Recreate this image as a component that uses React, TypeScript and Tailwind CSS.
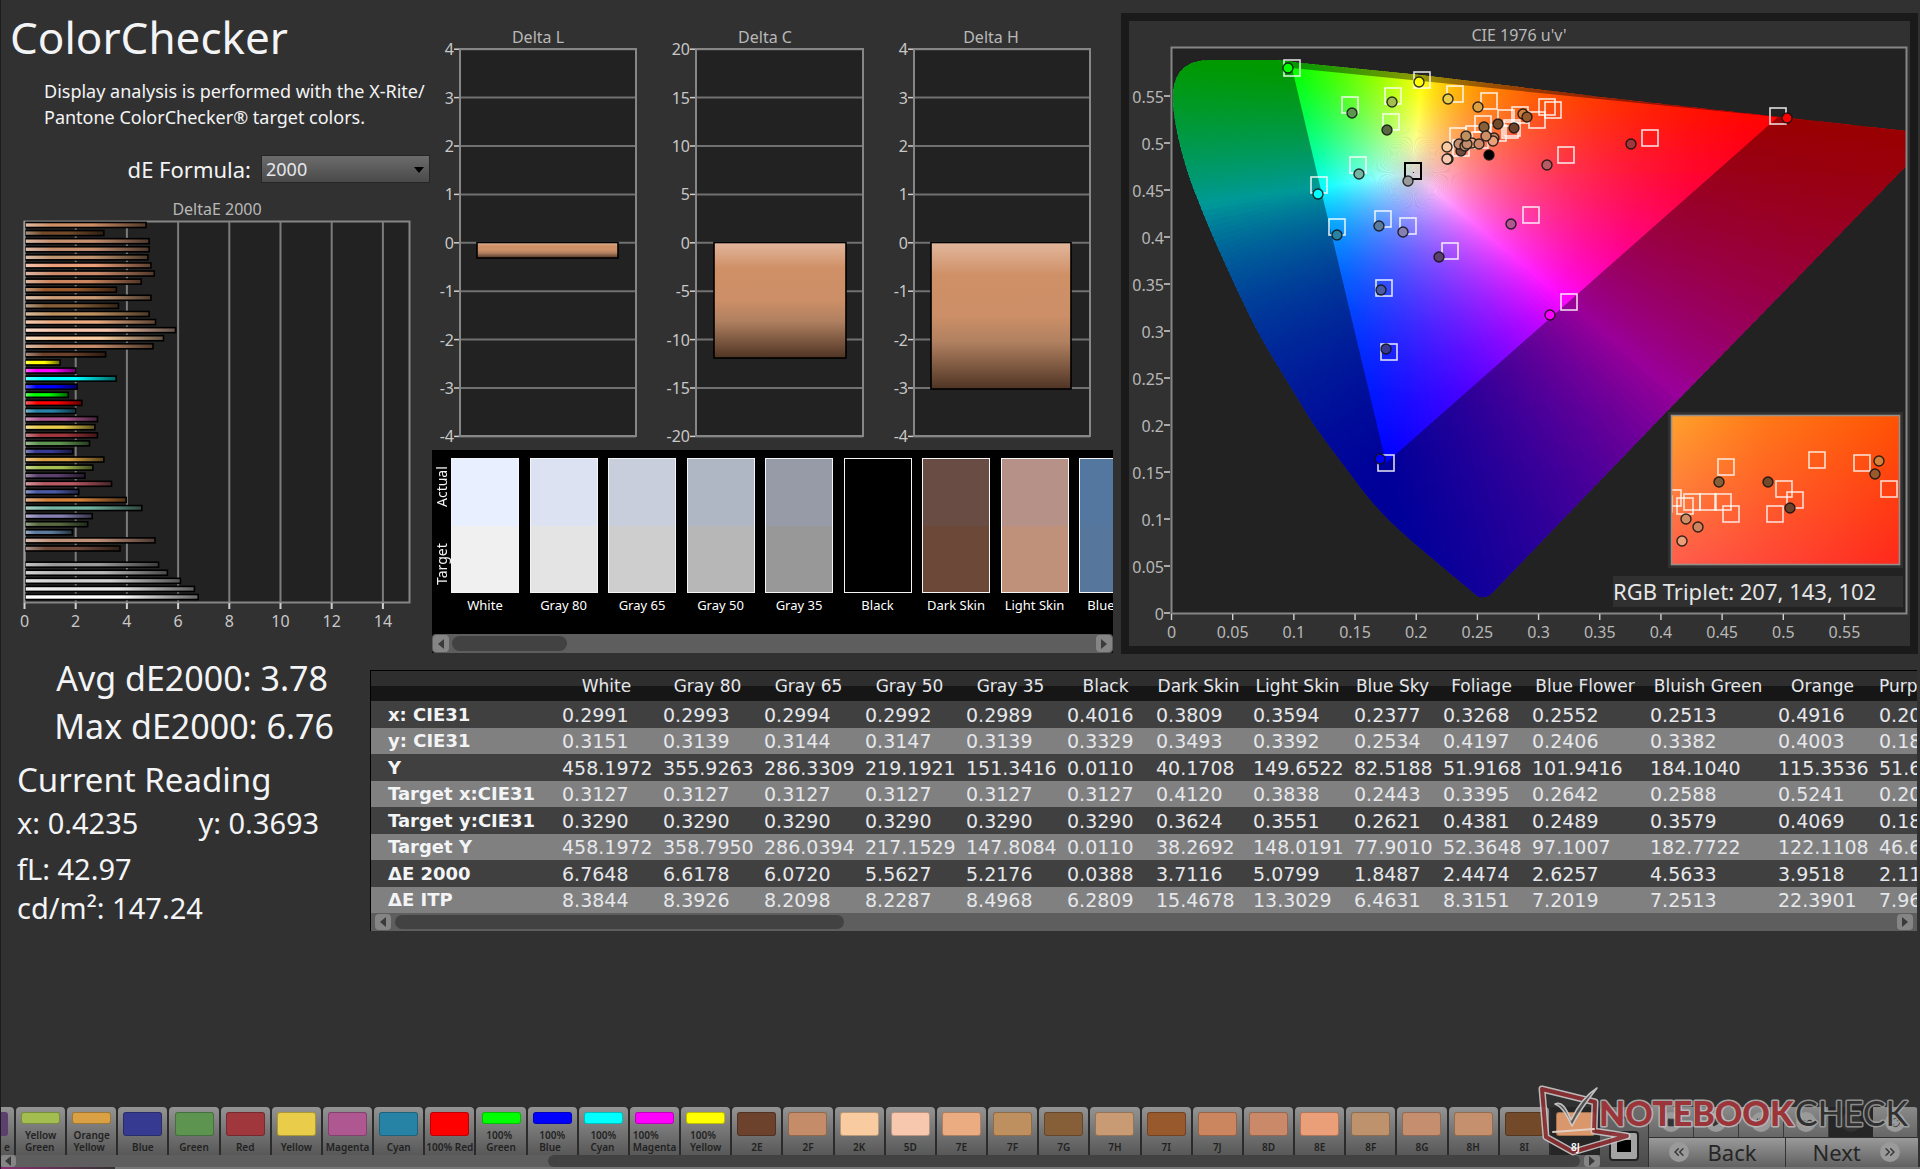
import React from 'react';
import {
  ChevronsLeft,
  ChevronsRight,
  ChevronUp,
  Infinity as InfinityIcon,
  Play,
  RefreshCw,
  Square,
  StepForward,
} from 'lucide-react';

// [delta E, bar colour], top row first
const DELTA_E: [number, string][] = [
  [4.73, '#cf8f66'], [3.08, '#724a2a'], [4.85, '#c48e6f'], [4.85, '#c48e6f'], [4.8, '#be926c'],
  [4.92, '#eb9f79'], [5.05, '#ca8a6a'], [4.54, '#cb8660'], [3.57, '#98592c'], [4.92, '#c99b75'],
  [3.65, '#865f38'], [4.85, '#be9060'], [5.1, '#ebac82'], [5.88, '#f7c7ae'], [5.41, '#f8cca0'],
  [5.0, '#c48c69'], [3.15, '#6c422c'], [1.37, '#ffff00'], [1.99, '#ff00ff'], [3.56, '#00ffff'],
  [2.04, '#0000ff'], [1.69, '#00ff00'], [2.22, '#ff0000'], [1.99, '#2783a5'], [2.83, '#ae5791'],
  [2.73, '#e9cc4a'], [2.83, '#a0373c'], [2.52, '#5d9450'], [1.87, '#363b91'], [3.08, '#d9a143'],
  [2.65, '#a3bd50'], [2.34, '#5b3f6d'], [3.38, '#b65a63'], [2.1, '#4a5ba5'], [3.9518, '#d3803a'],
  [4.5633, '#73b5a2'], [2.6257, '#8580b1'], [2.4474, '#56693f'], [1.8487, '#5b7a9e'], [5.0799, '#bf907a'],
  [3.7116, '#6e4a3c'], [0, '#000000'], [5.2176, '#9a9a9a'], [5.5627, '#b8b8b8'], [6.072, '#d0d0d0'],
  [6.6178, '#e8e8e8'], [6.7648, '#ffffff'],
];

const DELTA_CHARTS = [
  { title: 'Delta L', titleX: 538, left: 460, right: 636, step: 1, barLeft: 477, barRight: 618, bottom: 258 },
  { title: 'Delta C', titleX: 765, left: 696, right: 863, step: 5, barLeft: 714, barRight: 846, bottom: 358 },
  { title: 'Delta H', titleX: 991, left: 914, right: 1090, step: 1, barLeft: 931, barRight: 1071, bottom: 389 },
];

const PATCHES = [
  { name: 'White', actual: '#e8efff', target: '#f0f0f0' },
  { name: 'Gray 80', actual: '#dde2f3', target: '#e4e4e4' },
  { name: 'Gray 65', actual: '#c8cedb', target: '#cecece' },
  { name: 'Gray 50', actual: '#b0b7c4', target: '#b7b7b7' },
  { name: 'Gray 35', actual: '#979ba7', target: '#989898' },
  { name: 'Black', actual: '#000000', target: '#000000' },
  { name: 'Dark Skin', actual: '#694c43', target: '#6c4838' },
  { name: 'Light Skin', actual: '#b69188', target: '#bf907a' },
  { name: 'Blue Sky', actual: '#5477a0', target: '#57769b' },
];

const COLUMNS = ['White', 'Gray 80', 'Gray 65', 'Gray 50', 'Gray 35', 'Black', 'Dark Skin', 'Light Skin', 'Blue Sky', 'Foliage', 'Blue Flower', 'Bluish Green', 'Orange', 'Purplish Blue'];

const ROWS = [
  { label: 'x: CIE31', values: ['0.2991', '0.2993', '0.2994', '0.2992', '0.2989', '0.4016', '0.3809', '0.3594', '0.2377', '0.3268', '0.2552', '0.2513', '0.4916', '0.2048'] },
  { label: 'y: CIE31', values: ['0.3151', '0.3139', '0.3144', '0.3147', '0.3139', '0.3329', '0.3493', '0.3392', '0.2534', '0.4197', '0.2406', '0.3382', '0.4003', '0.1821'] },
  { label: 'Y', values: ['458.1972', '355.9263', '286.3309', '219.1921', '151.3416', '0.0110', '40.1708', '149.6522', '82.5188', '51.9168', '101.9416', '184.1040', '115.3536', '51.6210'] },
  { label: 'Target x:CIE31', values: ['0.3127', '0.3127', '0.3127', '0.3127', '0.3127', '0.3127', '0.4120', '0.3838', '0.2443', '0.3395', '0.2642', '0.2588', '0.5241', '0.2088'] },
  { label: 'Target y:CIE31', values: ['0.3290', '0.3290', '0.3290', '0.3290', '0.3290', '0.3290', '0.3624', '0.3551', '0.2621', '0.4381', '0.2489', '0.3579', '0.4069', '0.1852'] },
  { label: 'Target Y', values: ['458.1972', '358.7950', '286.0394', '217.1529', '147.8084', '0.0110', '38.2692', '148.0191', '77.9010', '52.3648', '97.1007', '182.7722', '122.1108', '46.6120'] },
  { label: 'ΔE 2000', values: ['6.7648', '6.6178', '6.0720', '5.5627', '5.2176', '0.0388', '3.7116', '5.0799', '1.8487', '2.4474', '2.6257', '4.5633', '3.9518', '2.1107'] },
  { label: 'ΔE ITP', values: ['8.3844', '8.3926', '8.2098', '8.2287', '8.4968', '6.2809', '15.4678', '13.3029', '6.4631', '8.3151', '7.2019', '7.2513', '22.3901', '7.9630'] },
];

const TILES: { lines: string[]; color: string }[] = [
  { lines: ['Yellow', 'Green'], color: '#a3bd50' },
  { lines: ['Orange', 'Yellow'], color: '#d9a143' },
  { lines: ['Blue'], color: '#363b91' },
  { lines: ['Green'], color: '#5d9450' },
  { lines: ['Red'], color: '#a0373c' },
  { lines: ['Yellow'], color: '#e9cc4a' },
  { lines: ['Magenta'], color: '#ae5791' },
  { lines: ['Cyan'], color: '#2783a5' },
  { lines: ['100% Red'], color: '#ff0000' },
  { lines: ['100%', 'Green'], color: '#00ff00' },
  { lines: ['100%', 'Blue'], color: '#0000ff' },
  { lines: ['100%', 'Cyan'], color: '#00ffff' },
  { lines: ['100%', 'Magenta'], color: '#ff00ff' },
  { lines: ['100%', 'Yellow'], color: '#ffff00' },
  { lines: ['2E'], color: '#6c422c' },
  { lines: ['2F'], color: '#c48c69' },
  { lines: ['2K'], color: '#f8cca0' },
  { lines: ['5D'], color: '#f7c7ae' },
  { lines: ['7E'], color: '#ebac82' },
  { lines: ['7F'], color: '#be9060' },
  { lines: ['7G'], color: '#865f38' },
  { lines: ['7H'], color: '#c99b75' },
  { lines: ['7I'], color: '#98592c' },
  { lines: ['7J'], color: '#cb8660' },
  { lines: ['8D'], color: '#ca8a6a' },
  { lines: ['8E'], color: '#eb9f79' },
  { lines: ['8F'], color: '#be926c' },
  { lines: ['8G'], color: '#c48e6f' },
  { lines: ['8H'], color: '#c4906e' },
  { lines: ['8I'], color: '#724a2a' },
];

const TARGETS = [
  [1292, 68], [1350, 105], [1393, 96], [1422, 80], [1391, 122], [1455, 94], [1489, 101], [1358, 165],
  [1319, 185], [1337, 227], [1383, 219], [1408, 226], [1450, 251], [1384, 288], [1569, 302], [1531, 215],
  [1566, 155], [1547, 107], [1553, 110], [1537, 120], [1520, 115], [1506, 118], [1512, 128], [1510, 130],
  [1498, 133], [1483, 124], [1474, 134], [1458, 136], [1461, 148], [1480, 140], [1650, 138], [1778, 116],
  [1389, 352], [1386, 463],
];

const MEASURED: [number, number, string][] = [
  [1288, 68, '#00ff00'], [1352, 113, '#5d9450'], [1392, 102, '#a3bd50'], [1387, 130, '#56693f'],
  [1419, 82, '#ffff00'], [1448, 99, '#e9cc4a'], [1478, 107, '#d9a143'], [1359, 174, '#73b5a2'],
  [1318, 194, '#00ffff'], [1337, 235, '#2783a5'], [1379, 226, '#5b7a9e'], [1403, 232, '#8580b1'],
  [1408, 181, '#9a9a9a'], [1439, 257, '#5b3f6d'], [1381, 290, '#4a5ba5'], [1550, 315, '#ff00ff'],
  [1511, 224, '#ae5791'], [1547, 165, '#b65a63'], [1489, 155, '#000000'], [1447, 147, '#f8cca0'],
  [1448, 159, '#bf907a'], [1447, 159, '#f7c7ae'], [1461, 151, '#6e4a3c'], [1459, 144, '#c48e6f'],
  [1472, 143, '#ebac82'], [1479, 144, '#ca8a6a'], [1465, 146, '#be926c'], [1467, 144, '#c48c69'],
  [1466, 136, '#be9060'], [1484, 127, '#865f38'], [1494, 138, '#cb8660'], [1493, 141, '#eb9f79'],
  [1486, 136, '#cf8f66'], [1498, 124, '#724a2a'], [1514, 128, '#6c422c'], [1523, 114, '#d3803a'],
  [1527, 117, '#98592c'], [1631, 144, '#a0373c'], [1787, 118, '#ff0000'], [1386, 349, '#363b91'],
  [1380, 459, '#0000ff'],
];

const ZOOM_TARGETS = [
  [1726, 467], [1817, 460], [1862, 463], [1784, 489], [1795, 500], [1775, 514], [1889, 489], [1731, 514],
  [1723, 502], [1708, 502], [1692, 502], [1685, 506], [1673, 498], [1664, 504],
];

const ZOOM_MEASURED: [number, number, string][] = [
  [1719, 482, '#865f38'], [1768, 482, '#724a2a'], [1879, 461, '#d3803a'], [1875, 474, '#98592c'],
  [1790, 508, '#6c422c'], [1686, 519, '#cf8f66'], [1698, 527, '#cb8660'], [1682, 541, '#eb9f79'],
];

// CIE 1976 plot geometry
const U0 = 1171.5;
const V0 = 613;
const U_SCALE = 1223.6;
const V_SCALE = 940;
const WHITE = { x: 1413.5, y: 172.8 };

const LOCUS =
  'M1173 98 C1173 74 1184 60 1211 60 L1273 60 C1285 60 1290 62 1300 63 L1420 75 L1560 92 L1600 97 L1780 117 L1906 131 L1906 166 L1756 320 L1668 410 L1493 592 C1488 598 1480 599 1475 594 L1426 553 C1406 536 1380 515 1355 480 C1338 457 1322 437 1309 417 C1290 385 1270 354 1257 330 C1240 297 1210 232 1197 197 C1186 170 1173 125 1173 98 Z';
const TRIANGLE = 'M1292 68 L1778 117 L1386 463 Z';

// Linear display RGB scaled so that the strongest channel is full
function chromaColor(px: number, py: number) {
  const u = (px - U0) / U_SCALE;
  const v = (V0 - py) / V_SCALE;
  const X = 9 * u;
  const Y = 4 * v;
  const Z = 12 - 3 * u - 20 * v;
  const rgb = [
    2.4934969 * X - 0.9313836 * Y - 0.4027108 * Z,
    -0.829489 * X + 1.7626641 * Y + 0.0236247 * Z,
    0.0358458 * X - 0.0761724 * Y + 0.9568845 * Z,
  ].map((c) => Math.max(0, c));
  const max = Math.max(...rgb, 0.0001);
  const out = rgb.map((c) => Math.round((255 * c) / max));
  return `rgb(${out.join(',')})`;
}

const WEDGE_COUNT = 240;
const RADIUS = 560;
const STOPS = [0, 0.03, 0.06, 0.1, 0.14, 0.18, 0.22, 0.27, 0.33, 0.4, 0.5, 0.6, 0.75, 1];

const WEDGES = Array.from({ length: WEDGE_COUNT }, (_, i) => {
  const step = (2 * Math.PI) / WEDGE_COUNT;
  const mid = i * step;
  const point = (angle: number, r: number) => [WHITE.x + Math.cos(angle) * r, WHITE.y + Math.sin(angle) * r];
  const [ax, ay] = point(mid - step * 0.8, RADIUS * 1.01);
  const [bx, by] = point(mid + step * 0.8, RADIUS * 1.01);
  const [ex, ey] = point(mid, RADIUS);
  return {
    path: `M${WHITE.x} ${WHITE.y} L${ax} ${ay} L${bx} ${by} Z`,
    ex,
    ey,
    stops: STOPS.map((s) => {
      const [sx, sy] = point(mid, RADIUS * s);
      return { offset: s, color: chromaColor(sx, sy) };
    }),
  };
});

const DeltaEChart = () => {
  const x = (value: number) => 24.5 + value * 25.6;
  return (
    <svg viewBox="0 195 432 455" className="block w-full" role="img" aria-label="DeltaE 2000">
      <defs>
        <linearGradient id="barShade" x1="0" x2="1" y1="0" y2="0">
          <stop offset="0" stopColor="#fff" stopOpacity="0.4" />
          <stop offset="0.22" stopColor="#fff" stopOpacity="0" />
          <stop offset="0.55" stopColor="#000" stopOpacity="0" />
          <stop offset="1" stopColor="#000" stopOpacity="0.6" />
        </linearGradient>
      </defs>
      <text x="217" y="215" textAnchor="middle" fontSize="16" fill="#b8b8b8">DeltaE 2000</text>
      <rect x="24.5" y="221.5" width="385" height="381" fill="#222222" stroke="#868686" strokeWidth="2" />
      {[0, 2, 4, 6, 8, 10, 12, 14].map((tick) => (
        <g key={tick}>
          <line x1={x(tick)} x2={x(tick)} y1="222" y2="602" stroke="#7c7c7c" strokeWidth="2" />
          <line x1={x(tick)} x2={x(tick)} y1="603" y2="609" stroke="#d0d0d0" strokeWidth="2" />
          <text x={x(tick)} y="627" textAnchor="middle" fontSize="16" fill="#c8c8c8">{tick}</text>
        </g>
      ))}
      {DELTA_E.map(([value, color], i) => {
        const y = 222.5 + i * 8.087;
        const width = value * 25.6;
        return value > 0 ? (
          <g key={i}>
            <rect x="25" y={y} width={width} height="5" fill={color} />
            <rect x="25" y={y} width={width} height="5" fill="url(#barShade)" stroke="#000" strokeWidth="1.6" />
          </g>
        ) : null;
      })}
      <line x1="24.5" x2="24.5" y1="221" y2="603" stroke="#9a9a9a" strokeWidth="1.5" />
    </svg>
  );
};

const DeltaCharts = () => (
  <svg viewBox="432 0 689 450" className="block w-full" role="img" aria-label="Delta L, Delta C and Delta H">
    <defs>
      <linearGradient id="skinBar" x1="0" x2="0" y1="0" y2="1">
        <stop offset="0" stopColor="#e2b79d" />
        <stop offset="0.22" stopColor="#cf9067" />
        <stop offset="0.5" stopColor="#cc8f67" />
        <stop offset="0.68" stopColor="#b08060" />
        <stop offset="1" stopColor="#4f3424" />
      </linearGradient>
    </defs>
    {DELTA_CHARTS.map((chart) => (
      <g key={chart.title}>
        <text x={chart.titleX} y="43" textAnchor="middle" fontSize="16" fill="#b8b8b8">{chart.title}</text>
        <rect x={chart.left} y="49" width={chart.right - chart.left} height="387" fill="#222222" />
        {[4, 3, 2, 1, 0, -1, -2, -3, -4].map((n) => {
          const y = 242.8 - n * 48.4;
          return (
            <g key={n}>
              <line x1={chart.left} x2={chart.right} y1={y} y2={y} stroke="#717171" strokeWidth="2" />
              <line x1={chart.left - 6} x2={chart.left} y1={y} y2={y} stroke="#d0d0d0" strokeWidth="1.5" />
              <text x={chart.left - 6} y={y + 6} textAnchor="end" fontSize="16" fill="#c8c8c8">{n * chart.step}</text>
            </g>
          );
        })}
        <rect x={chart.left} y="49" width={chart.right - chart.left} height="387" fill="none" stroke="#868686" strokeWidth="2" />
        <rect x={chart.barLeft} y="242.5" width={chart.barRight - chart.barLeft} height={chart.bottom - 242.5} fill="url(#skinBar)" stroke="#000" strokeWidth="1.6" />
      </g>
    ))}
  </svg>
);

const Marker = ({ x, y, color }: { x: number; y: number; color: string }) => (
  <circle cx={x} cy={y} r="5" fill={color} stroke="#111" strokeOpacity="0.85" strokeWidth="1.4" />
);

const CieChart = () => (
  <svg viewBox="1129 21 781 625" className="block w-full" role="img" aria-label="CIE 1976 u'v' chromaticity diagram">
    <defs>
      {WEDGES.map((wedge, i) => (
        <linearGradient key={i} id={`hue${i}`} gradientUnits="userSpaceOnUse" x1={WHITE.x} y1={WHITE.y} x2={wedge.ex} y2={wedge.ey}>
          {wedge.stops.map((stop) => (
            <stop key={stop.offset} offset={stop.offset} stopColor={stop.color} />
          ))}
        </linearGradient>
      ))}
      <clipPath id="locusClip"><path d={LOCUS} /></clipPath>
      <clipPath id="zoomClip"><rect x="1672" y="416" width="227" height="149" /></clipPath>
      <linearGradient id="zoomTop" x1="0" x2="1" y1="0" y2="0">
        <stop offset="0" stopColor="#ffa22b" />
        <stop offset="0.4" stopColor="#ff7a18" />
        <stop offset="1" stopColor="#ff5404" />
      </linearGradient>
      <linearGradient id="zoomBottom" x1="0" x2="1" y1="0" y2="0">
        <stop offset="0" stopColor="#ff5c4e" />
        <stop offset="1" stopColor="#ff281c" />
      </linearGradient>
      <linearGradient id="zoomFade" x1="0" x2="0" y1="0" y2="1">
        <stop offset="0" stopColor="#000" />
        <stop offset="1" stopColor="#fff" />
      </linearGradient>
      <mask id="zoomMask"><rect x="1671" y="415" width="229" height="151" fill="url(#zoomFade)" /></mask>
    </defs>

    <text x="1519" y="41" textAnchor="middle" fontSize="16" fill="#b8b8b8">CIE 1976 u'v'</text>
    <rect x="1171.5" y="47.5" width="735" height="566" fill="#222222" />
    <g clipPath="url(#locusClip)">
      {WEDGES.map((wedge, i) => (
        <path key={i} d={wedge.path} fill={`url(#hue${i})`} />
      ))}
      <path d={`M1129 21 H1910 V646 H1129 Z ${TRIANGLE}`} fillRule="evenodd" fill="#000" fillOpacity="0.4" />
    </g>
    <rect x="1171.5" y="47.5" width="735" height="566" fill="none" stroke="#868686" strokeWidth="2" />

    {[0, 0.05, 0.1, 0.15, 0.2, 0.25, 0.3, 0.35, 0.4, 0.45, 0.5, 0.55].map((tick) => {
      const x = U0 + tick * U_SCALE;
      const y = V0 - tick * V_SCALE;
      return (
        <g key={tick} fontSize="16" fill="#b8b8b8">
          <line x1={x} x2={x} y1="614" y2="620" stroke="#d0d0d0" strokeWidth="1.4" />
          <text x={x} y="638" textAnchor="middle">{tick}</text>
          <line x1="1164" x2="1170" y1={y} y2={y} stroke="#d0d0d0" strokeWidth="1.5" />
          <text x="1164" y={y + 7} textAnchor="end">{tick}</text>
        </g>
      );
    })}

    {TARGETS.map(([x, y], i) => (
      <rect key={i} x={x - 8} y={y - 8} width="16" height="16" fill="none" stroke="#fff" strokeOpacity="0.85" strokeWidth="1.6" />
    ))}
    <rect x="1405" y="163" width="16" height="16" fill="none" stroke="#000" strokeWidth="2" />
    {MEASURED.map(([x, y, color], i) => (
      <Marker key={i} x={x} y={y} color={color} />
    ))}

    {/* Magnified region */}
    <rect x="1668" y="412" width="235" height="156" fill="#303030" />
    <rect x="1672" y="416" width="227" height="149" fill="url(#zoomTop)" />
    <rect x="1672" y="416" width="227" height="149" fill="url(#zoomBottom)" mask="url(#zoomMask)" />
    <g clipPath="url(#zoomClip)">
      {ZOOM_TARGETS.map(([x, y], i) => (
        <rect key={i} x={x - 8} y={y - 8} width="16" height="16" fill="none" stroke="#fff" strokeOpacity="0.8" strokeWidth="1.6" />
      ))}
      {ZOOM_MEASURED.map(([x, y, color], i) => (
        <Marker key={i} x={x} y={y} color={color} />
      ))}
    </g>
    <rect x="1671.5" y="415.5" width="228" height="149" fill="none" stroke="#9a8f88" strokeWidth="1.6" />

    <rect x="1613" y="576" width="290" height="31" fill="#303030" />
    <text x="1613" y="600" fontSize="22" fill="#e6e6e6">RGB Triplet: 207, 143, 102</text>
  </svg>
);

const ArrowButton = ({ direction, label }: { direction: 'left' | 'right'; label: string }) => (
  <button type="button" aria-label={label} className="flex h-full w-4 shrink-0 items-center justify-center rounded-sm bg-[#858585]">
    <svg viewBox="0 0 8 10" className="h-[10px] w-2" fill="#3a3a3a">
      {direction === 'left' ? <path d="M7 0 L1 5 L7 10 Z" /> : <path d="M1 0 L7 5 L1 10 Z" />}
    </svg>
  </button>
);

const SwatchPanel = () => (
  <section className="mr-2 overflow-hidden bg-black">
    <div className="flex h-[184px] pt-2">
      <div className="flex h-[135px] w-[19px] shrink-0 text-[14px] leading-[19px] text-gray-100">
        <span className="flex w-full rotate-180 items-center justify-between pt-2 pb-2 [writing-mode:vertical-rl]">
          <span>Target</span>
          <span>Actual</span>
        </span>
      </div>
      <div className="grid min-w-0 flex-1 auto-cols-[11.86%] grid-flow-col overflow-hidden">
        {PATCHES.map((patch) => (
          <figure key={patch.name} className="w-[68px]">
            <div className="h-[135px] border border-gray-100">
              <div className="h-1/2" style={{ backgroundColor: patch.actual }} />
              <div className="h-1/2" style={{ backgroundColor: patch.target }} />
            </div>
            <figcaption className="pt-[2px] text-center text-[13px] leading-5 whitespace-nowrap text-white">{patch.name}</figcaption>
          </figure>
        ))}
      </div>
    </div>
    <div className="flex h-[19px] gap-[3px] rounded-sm bg-[#5e5e5e] p-px">
      <ArrowButton direction="left" label="Scroll swatches left" />
      <div className="flex-1 py-px">
        <div className="h-full w-[18%] rounded-lg bg-[#424242]" />
      </div>
      <ArrowButton direction="right" label="Scroll swatches right" />
    </div>
  </section>
);

const ReadingsTable = () => (
  <section className="mt-4 min-w-0 flex-1 self-start overflow-hidden border-t border-l border-black">
    <div className="overflow-hidden">
      <table className="w-[1620px] table-fixed border-collapse text-left font-['DejaVu_Sans',sans-serif] text-[19px] leading-5 whitespace-nowrap text-gray-200">
        <colgroup>
          <col className="w-[185px]" />
          <col className="w-[101px]" />
          <col className="w-[101px]" />
          <col className="w-[101px]" />
          <col className="w-[101px]" />
          <col className="w-[101px]" />
          <col className="w-[89px]" />
          <col className="w-[97px]" />
          <col className="w-[101px]" />
          <col className="w-[89px]" />
          <col className="w-[89px]" />
          <col className="w-[118px]" />
          <col className="w-[128px]" />
          <col className="w-[101px]" />
          <col className="w-[118px]" />
        </colgroup>
        <thead>
          <tr className="h-[30px] bg-linear-to-b from-[#2e2e2e] from-50% to-[#161616] to-50%">
            <th aria-label="Measurement" />
            {COLUMNS.map((name) => (
              <th key={name} scope="col" className={name === 'Purplish Blue' ? 'pl-[6px] text-left text-[17px] font-normal' : 'text-center text-[17px] font-normal'}>{name}</th>
            ))}
          </tr>
        </thead>
        <tbody>
          {ROWS.map((row) => (
            <tr key={row.label} className="h-[27px] bg-[#404040] even:h-[26px] even:bg-[#808080]">
              <th scope="row" className="pl-[17px] text-[18px] font-bold text-gray-100">{row.label}</th>
              {row.values.map((value, i) => (
                <td key={i} className="pl-[6px]">{value}</td>
              ))}
            </tr>
          ))}
        </tbody>
      </table>
    </div>
    <div className="flex h-[18px] gap-1 bg-[#5e5e5e] px-[4px] py-px">
      <ArrowButton direction="left" label="Scroll table left" />
      <div className="flex-1 py-px">
        <div className="h-full w-[30%] rounded-lg bg-[#424242]" />
      </div>
      <ArrowButton direction="right" label="Scroll table right" />
    </div>
  </section>
);

const PatternTile = ({ lines, color, selected }: { lines: string[]; color: string; selected?: boolean }) => (
  <button
    type="button"
    className={
      selected
        ? 'flex h-12 flex-col items-center rounded-t bg-[#262626] pt-[5px] pb-[2px] text-[10px] leading-3 font-semibold text-white'
        : 'flex h-12 flex-col items-center rounded-t bg-linear-to-b from-[#949494] to-[#585858] pt-[5px] pb-[2px] text-[10px] leading-3 font-semibold text-[#222]'
    }
  >
    <span
      className={lines.length > 1 ? 'h-3 w-[39px] shrink-0 rounded-[3px] border border-black/25' : 'h-6 w-[39px] shrink-0 rounded-[3px] border border-black/25'}
      style={{ backgroundColor: color }}
    />
    <span className={selected ? 'relative z-10 mt-auto whitespace-nowrap' : 'mt-auto text-left whitespace-nowrap'}>
      {lines.map((line) => (
        <span key={line} className="block">{line}</span>
      ))}
    </span>
  </button>
);

const ROUND = 'flex size-5 items-center justify-center rounded-full bg-[#9a9a9a] text-[#333]';
const TOOL = 'flex flex-1 items-center justify-center border-r border-[#3a3a3a] bg-linear-to-b from-[#8a8a8a] to-[#666]';

const Controls = () => (
  <div className="flex h-[60px] w-[318px] shrink-0">
    <div className="flex w-12 flex-col items-center justify-between rounded-t bg-linear-to-b from-[#6e6e6e] to-[#4a4a4a] pt-1 pb-[6px]">
      <button type="button" aria-label="Expand" className="text-[#2a2a2a]"><ChevronUp size={16} /></button>
      <button type="button" aria-label="Show pattern window" className="flex size-[30px] items-center justify-center rounded border-2 border-[#222] bg-[#a4a4a4]">
        <span className="h-3 w-[14px] bg-black" />
      </button>
    </div>
    <div className="flex flex-1 flex-col gap-px pl-px">
      <div className="flex h-[30px] overflow-hidden rounded-t">
        <button type="button" aria-label="Stop" className={TOOL}><span className={ROUND}><Square size={9} fill="currentColor" /></span></button>
        <button type="button" aria-label="Play" className={TOOL}><span className={ROUND}><Play size={10} fill="currentColor" /></span></button>
        <button type="button" aria-label="Step" className={TOOL}><span className={ROUND}><StepForward size={11} /></span></button>
        <button type="button" aria-label="Continuous" className={TOOL}><span className={ROUND}><InfinityIcon size={13} /></span></button>
        <button type="button" aria-label="Record" className="flex flex-1 items-center justify-center bg-[#262626]"><span className="size-5 rounded-full bg-[#333]" /></button>
        <button type="button" aria-label="Refresh" className={TOOL}><span className={ROUND}><RefreshCw size={11} /></span></button>
      </div>
      <div className="flex flex-1 text-[22px] leading-none text-[#262626]">
        <button type="button" className="flex flex-1 items-center justify-between border-r border-[#333] bg-linear-to-b from-[#9a9a9a] to-[#616161] pr-7 pb-[2px] pl-5">
          <span className={ROUND}><ChevronsLeft size={16} /></span>
          Back
        </button>
        <button type="button" className="flex flex-1 items-center justify-between bg-linear-to-b from-[#9a9a9a] to-[#616161] pr-[18px] pb-[2px] pl-[27px]">
          Next
          <span className={ROUND}><ChevronsRight size={16} /></span>
        </button>
      </div>
    </div>
  </div>
);

const Watermark = () => (
  <svg viewBox="1535 1080 385 80" className="pointer-events-none absolute right-0 bottom-[9px] h-20 w-[385px]" role="img" aria-label="Notebookcheck">
    <g strokeLinejoin="round" strokeLinecap="round" fill="none" opacity="0.9">
      <path d="M1542 1089 L1595 1102 L1594 1131 L1627 1136 L1573 1152 L1546 1137 Z" stroke="#c9c9c9" strokeWidth="7" />
      <path d="M1542 1089 L1595 1102 L1594 1131 L1627 1136 L1573 1152 L1546 1137 Z" stroke="#8d2f33" strokeWidth="4" />
      <path d="M1553 1132 L1594 1129" stroke="#e6d6cf" strokeWidth="2" />
      <path d="M1555 1104 C1562 1101 1566 1108 1571 1120 C1577 1107 1586 1095 1597 1088 C1587 1101 1578 1114 1572 1126 C1568 1118 1564 1108 1555 1104 Z" fill="#555" stroke="#cfcfcf" strokeWidth="1.6" />
    </g>
    <g fontFamily="Lato, sans-serif" fontSize="34" strokeLinejoin="round" style={{ paintOrder: 'stroke' }} strokeWidth="3">
      <text x="1599" y="1126" fontWeight="900" fill="#9c3539" stroke="#c4c4c4" strokeOpacity="0.8">NOTEBOOK</text>
      <text x="1795" y="1126" fontWeight="400" fill="#303030" stroke="#a8a8a8" strokeOpacity="0.8">CHECK</text>
    </g>
  </svg>
);

const App = () => {
  return (
    <div className="flex min-h-screen flex-col overflow-hidden border-l border-[#1c1c1c] bg-[#313131] font-['Noto_Sans',sans-serif] text-gray-100">
      <main className="-ml-px">
        <div className="grid grid-cols-[432fr_689fr_799fr] items-start">
          <section>
            <header className="h-[195px]">
              <h1 className="pt-[7px] pl-[10px] text-[44px] leading-[60px]">ColorChecker</h1>
              <p className="pt-[11px] pl-[44px] text-[18px] leading-[26px] whitespace-nowrap">
                Display analysis is performed with the X-Rite/
                <br />
                Pantone ColorChecker® target colors.
              </p>
              <div className="mt-[25px] flex items-center justify-end gap-[10px] pr-[2px]">
                <label htmlFor="formula" className="text-[22px] leading-7">dE Formula:</label>
                <div className="relative">
                  <select id="formula" className="h-7 w-[169px] appearance-none border border-[#262626] bg-linear-to-b from-[#6c6c6c] to-[#4a4a4a] pl-1 text-[18px] leading-6 text-gray-200">
                    <option>2000</option>
                  </select>
                  <svg viewBox="0 0 10 6" className="pointer-events-none absolute top-3 right-[6px] h-[6px] w-[10px]"><path d="M0 0 H10 L5 6 Z" /></svg>
                </div>
              </div>
            </header>
            <DeltaEChart />
          </section>

          <section>
            <DeltaCharts />
            <SwatchPanel />
          </section>

          <section className="mt-[13px] mr-[2px] border-8 border-[#1a1a1a]">
            <CieChart />
          </section>
        </div>

        <div className="flex pr-[3px]">
          <section className="w-[370px] shrink-0 pl-[17px] text-[29px] leading-9 whitespace-nowrap">
            <div className="pr-[36px] text-right text-[34px] leading-[48px]">
              <p className="pr-[6px]">Avg dE2000: 3.78</p>
              <p>Max dE2000: 6.76</p>
            </div>
            <h2 className="pt-[6px] text-[33px] leading-[48px]">Current Reading</h2>
            <div className="flex gap-[60px] pt-px">
              <p>x: 0.4235</p>
              <p>y: 0.3693</p>
            </div>
            <p className="pt-[10px]">fL: 42.97</p>
            <p className="pt-[3px]">cd/m²: 147.24</p>
          </section>
          <ReadingsTable />
        </div>
      </main>

      <footer className="relative mt-auto -ml-px">
        <div className="flex items-end pr-[2px]">
          <div className="min-w-0 flex-1 bg-[#2b2b2b]">
            <div className="flex">
              <div className="h-12 w-[14px] shrink-0 overflow-hidden rounded-tr bg-linear-to-b from-[#949494] to-[#585858] pt-[5px] text-[10px] leading-3 font-semibold text-[#222]">
                <div className="h-6 w-2 rounded-r-[3px] bg-[#5b3f6d]" />
                <div className="flex h-[17px] items-end justify-center">e</div>
              </div>
              <div className="ml-[2px] grid min-w-0 flex-1 auto-cols-fr grid-flow-col gap-x-[2px]">
                {TILES.map((tile, i) => (
                  <PatternTile key={i} lines={tile.lines} color={tile.color} />
                ))}
                <PatternTile lines={['8J']} color="#d9976b" selected />
              </div>
            </div>
            <div className="flex h-3 bg-[#5e5e5e]">
              <ArrowButton direction="left" label="Scroll patterns left" />
              <div className="flex flex-1 justify-end pr-1">
                <div className="h-full w-[66%] rounded-lg bg-[#424242]" />
              </div>
              <ArrowButton direction="right" label="Scroll patterns right" />
            </div>
          </div>
          <Controls />
        </div>
        <div className="flex h-[2px] bg-[#777]">
          <div className="w-[6%] bg-linear-to-r from-[#8a2a70] to-[#333]" />
        </div>
        <Watermark />
      </footer>
    </div>
  );
};

export default App;
